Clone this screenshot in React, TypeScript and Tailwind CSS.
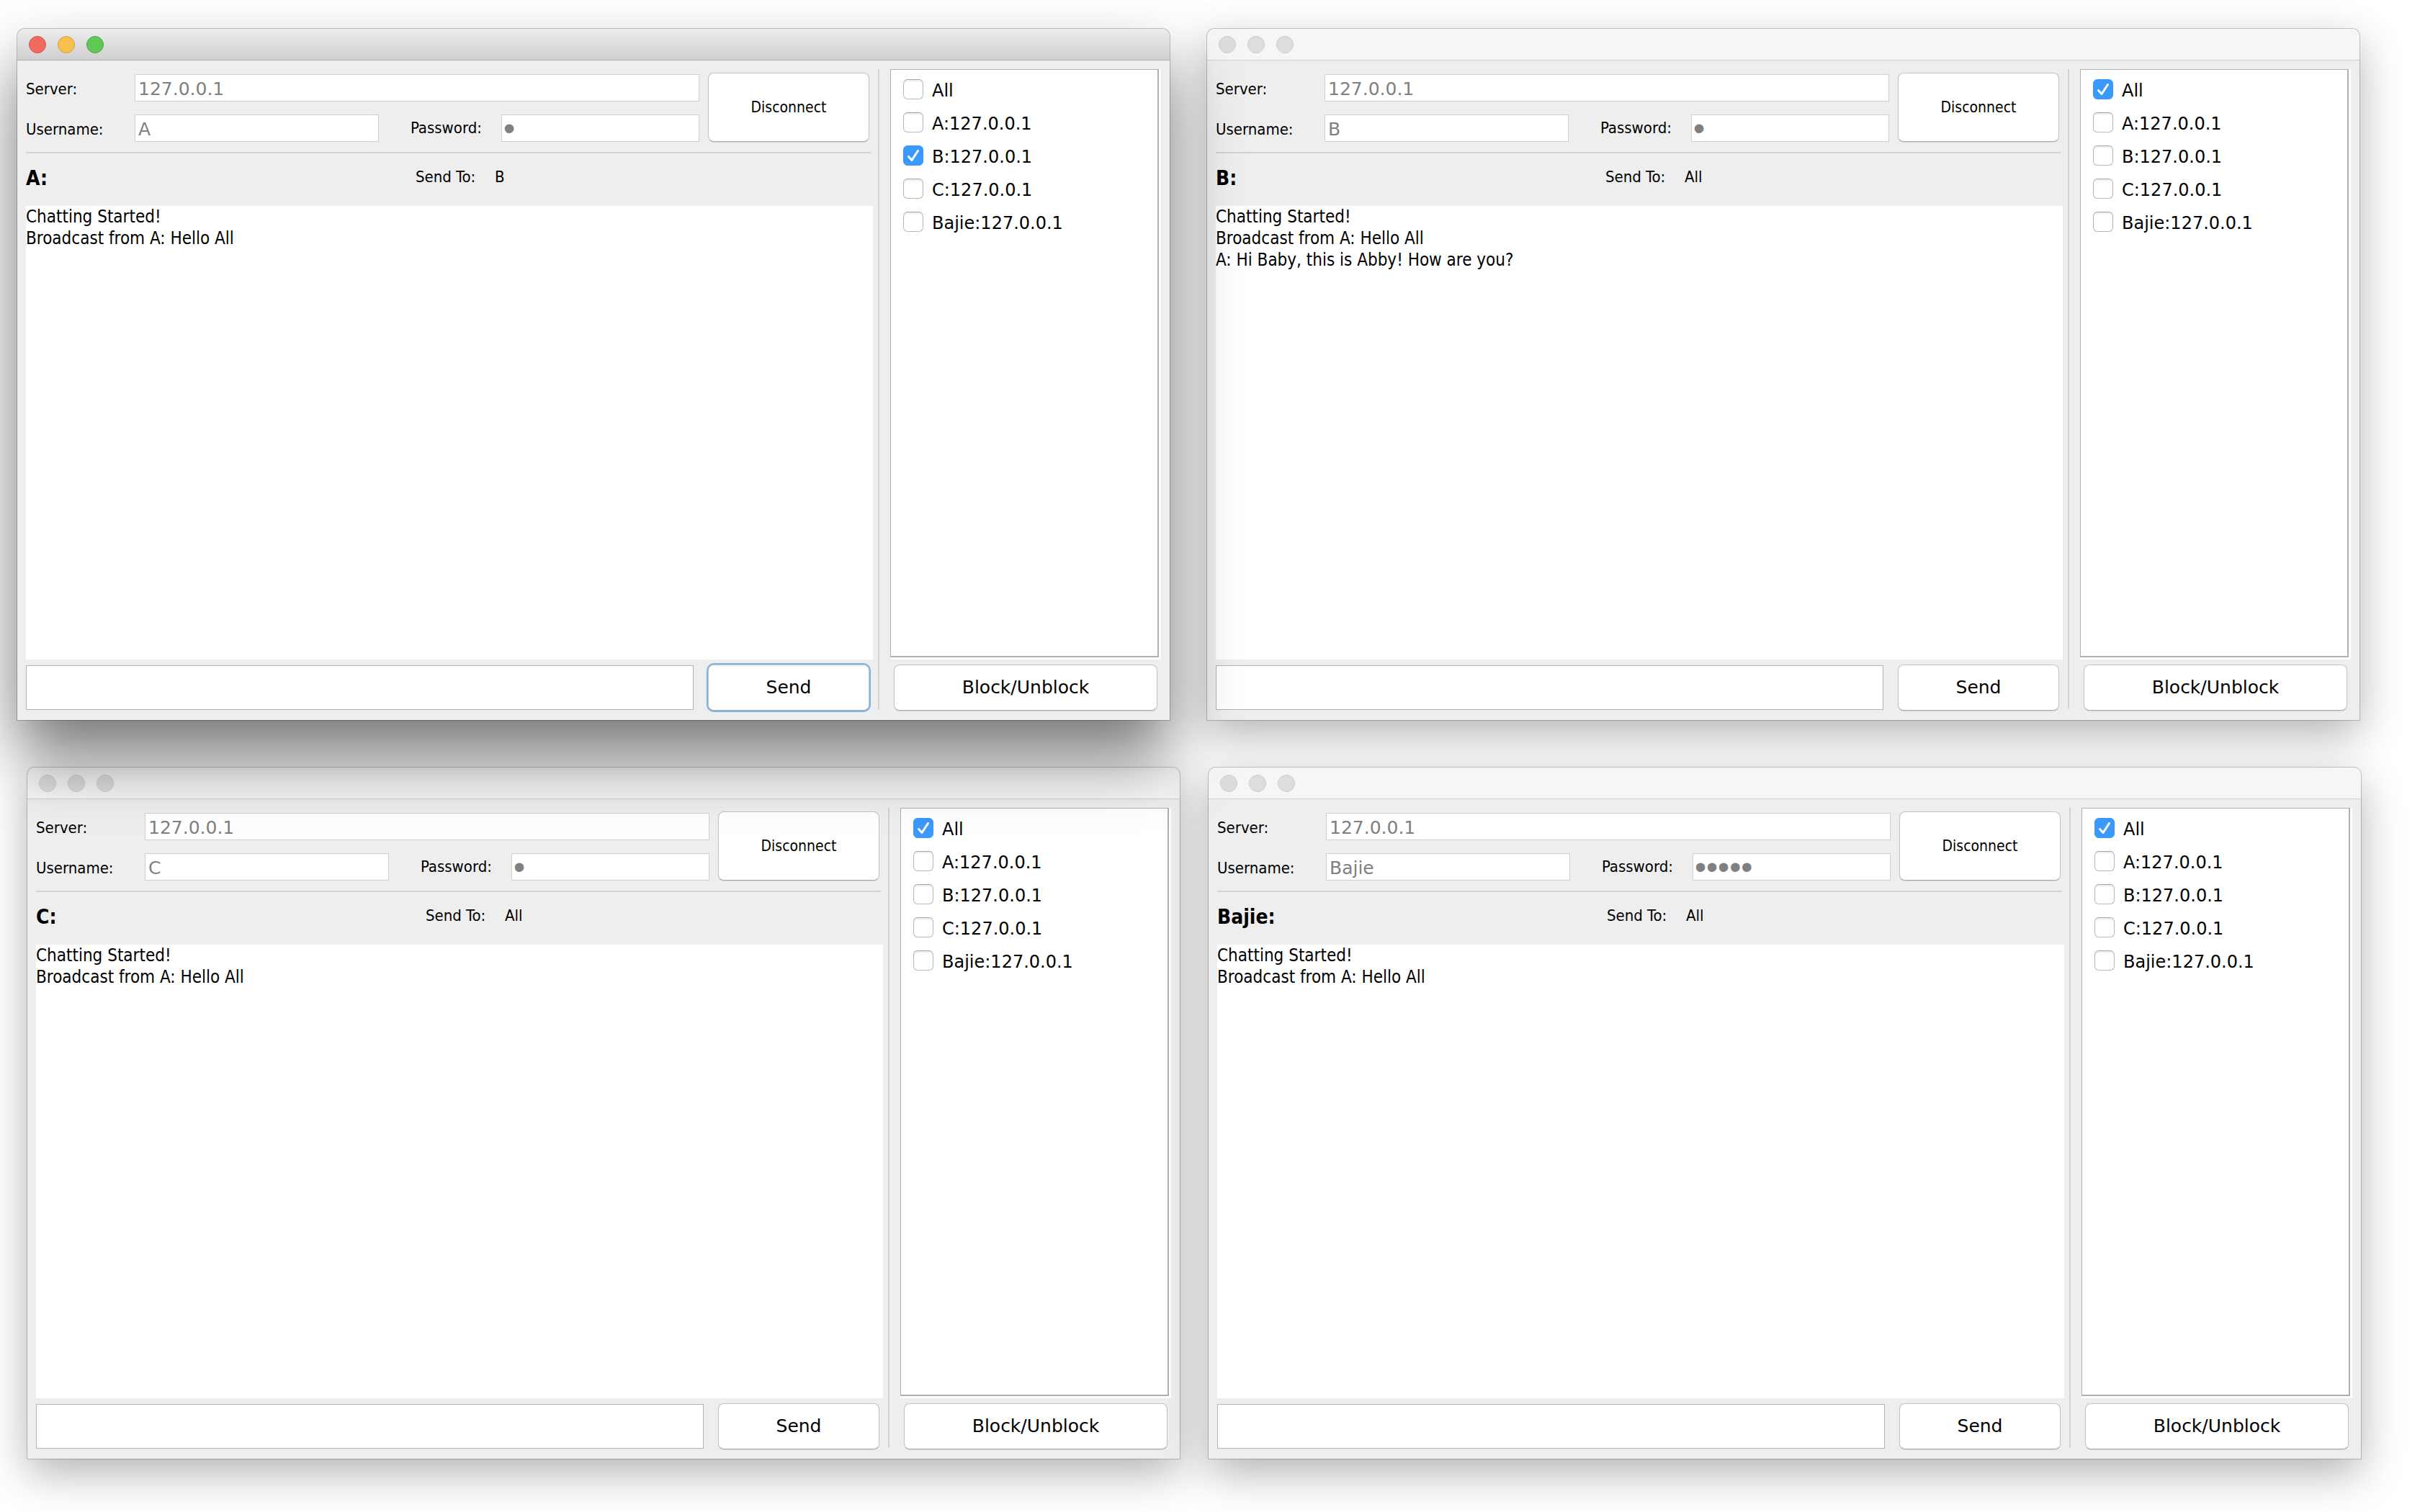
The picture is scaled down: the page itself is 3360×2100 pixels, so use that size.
import { useId } from "react";

type ChatWindowProps = {
  user: string;
  passwordLength: number;
  sendTo: string;
  messages: string[];
  active?: boolean;
  layer: string;
};

const SERVER = "127.0.0.1";

const USERS = ["A", "B", "C", "Bajie"];

const BUTTON =
  "rounded-lg border border-[#c4c4c4] border-b-[#a9a9a9] bg-white text-black shadow-[0_1px_1px_rgba(0,0,0,0.1)]";

const FIELD = "h-[38px] min-w-0 border border-[#d0d0d0] bg-white text-[#808080]";

const FIELD_TEXT =
  "px-1 pt-0.5 font-['DejaVu_Sans','Noto_Sans',sans-serif] text-[25px] leading-8";

const LABEL = "text-[22px] leading-7 text-black";

function TitleBar({ active }: { active?: boolean }) {
  const bar = active
    ? "border-[#adadad] bg-linear-to-b from-[#ececec] to-[#d0d0d0]"
    : "border-[#cfcfcf] bg-[#f6f6f6]";
  const lights = active
    ? [
        { name: "Close", tone: "border-[#dc5248] bg-[#ee6b60]" },
        { name: "Minimize", tone: "border-[#dba038] bg-[#f5c04f]" },
        { name: "Zoom", tone: "border-[#4aa93c] bg-[#61c756]" },
      ]
    : [
        { name: "Close", tone: "border-[#cdcdcd] bg-[#dddddd]" },
        { name: "Minimize", tone: "border-[#cdcdcd] bg-[#dddddd]" },
        { name: "Zoom", tone: "border-[#cdcdcd] bg-[#dddddd]" },
      ];
  return (
    <header className={`flex h-11 items-center gap-4 rounded-t-[10px] border-b px-4 ${bar}`}>
      {lights.map((light) => (
        <button
          key={light.name}
          type="button"
          aria-label={light.name}
          className={`size-6 rounded-full border ${light.tone}`}
        />
      ))}
    </header>
  );
}

function Recipient({ label, checked }: { label: string; checked: boolean }) {
  return (
    <label className="flex h-7 items-center gap-3 font-['DejaVu_Sans','Noto_Sans',sans-serif] text-2xl leading-7 text-black">
      <span className="grid size-7 shrink-0">
        <input
          type="checkbox"
          defaultChecked={checked}
          className="peer col-start-1 row-start-1 size-7 appearance-none rounded-[6px] border border-[#b9b9b9] border-t-[#a5a5a5] bg-white shadow-[inset_0_2px_2px_rgba(0,0,0,0.08)] checked:border-[#3b96f6] checked:bg-[#3b99fc] checked:shadow-none"
        />
        <svg
          viewBox="0 0 28 28"
          fill="none"
          stroke="white"
          strokeWidth="3"
          strokeLinecap="round"
          strokeLinejoin="round"
          aria-hidden="true"
          className="pointer-events-none col-start-1 row-start-1 hidden size-7 peer-checked:block"
        >
          <path d="M7.5 15.5 L12 20.5 L20.5 7.5" />
        </svg>
      </span>
      <span className="pt-1">{label}</span>
    </label>
  );
}

function ChatWindow({ user, passwordLength, sendTo, messages, active, layer }: ChatWindowProps) {
  const id = useId();
  const shadow = active
    ? "shadow-[0_0_0_1px_rgba(0,0,0,0.22),0_50px_90px_rgba(0,0,0,0.54)]"
    : "shadow-[0_0_0_1px_rgba(0,0,0,0.2),0_20px_60px_rgba(0,0,0,0.3)]";
  const sendRing = active ? "ring-2 ring-[#7fb2ea]" : "";
  return (
    <section
      aria-label={`Chat window of ${user}`}
      className={`relative flex min-w-0 flex-1 flex-col rounded-t-[10px] bg-[#eeeeee] ${layer} ${shadow}`}
    >
      <TitleBar active={active} />
      <div className="flex flex-1 px-3 pt-3 pb-3">
        <div className="flex min-w-0 flex-1 flex-col">
          <form className="mt-[5px] flex gap-3 pr-[5px]">
            <div className="flex min-w-0 flex-1 flex-col gap-[18px] pt-0.5">
              <div className="flex items-center">
                <label htmlFor={`${id}-server`} className={`w-[151px] shrink-0 pt-1 ${LABEL}`}>
                  Server:
                </label>
                <input
                  id={`${id}-server`}
                  disabled
                  defaultValue={SERVER}
                  className={`flex-1 ${FIELD} ${FIELD_TEXT}`}
                />
              </div>
              <div className="flex items-center">
                <label htmlFor={`${id}-name`} className={`w-[151px] shrink-0 pt-1 ${LABEL}`}>
                  Username:
                </label>
                <input
                  id={`${id}-name`}
                  disabled
                  defaultValue={user}
                  className={`flex-[11] ${FIELD} ${FIELD_TEXT}`}
                />
                <label htmlFor={`${id}-pass`} className={`ml-11 w-[126px] shrink-0 ${LABEL}`}>
                  Password:
                </label>
                <input
                  id={`${id}-pass`}
                  type="password"
                  disabled
                  defaultValue={"x".repeat(passwordLength)}
                  className={`flex-[9] px-0.5 font-['Liberation_Sans',sans-serif] text-[46px] leading-8 ${FIELD}`}
                />
              </div>
            </div>
            <button type="button" className={`w-56 shrink-0 text-[21px] leading-7 ${BUTTON}`}>
              Disconnect
            </button>
          </form>
          <hr className="mt-3.5 mr-[3px] h-0.5 border-0 bg-[#d3d3d3]" />
          <div className="flex h-[73px] items-center pb-1">
            <h2 className="w-[46%] text-[28px] leading-9 font-bold text-black">{user}:</h2>
            <span className={`w-[110px] pb-1 ${LABEL}`}>Send To:</span>
            <output className={`pb-1 ${LABEL}`}>{sendTo}</output>
          </div>
          <textarea
            readOnly
            aria-label="Conversation"
            value={messages.join("\n")}
            className="min-h-60 w-full flex-1 resize-none bg-white text-2xl leading-[30px] text-black outline-none"
          />
          <form className="mt-1.5 flex h-[66px] items-center gap-5 pr-[5px]">
            <input
              aria-label="Message"
              className="h-[62px] min-w-0 flex-1 border border-[#b4b4b4] bg-white px-2 text-2xl"
            />
            <button
              type="button"
              className={`h-16 w-56 font-['DejaVu_Sans','Noto_Sans',sans-serif] text-[25px] ${BUTTON} ${sendRing}`}
            >
              Send
            </button>
          </form>
        </div>
        <div className="mr-[15px] mb-[3px] ml-[7px] w-0.5 bg-[#d3d3d3]" />
        <aside className="flex w-[376px] shrink-0 flex-col">
          <div className="flex flex-1 bg-white pr-[3px] pb-[3px]">
            <fieldset className="flex flex-1 flex-col gap-[18px] border-t border-r-2 border-b-2 border-l border-[#b0b0b0] pt-[13px] pl-[17px]">
              <Recipient label="All" checked={sendTo === "All"} />
              {USERS.map((name) => (
                <Recipient key={name} label={`${name}:${SERVER}`} checked={sendTo === name} />
              ))}
            </fieldset>
          </div>
          <div className="mt-1.5 flex h-[66px] items-center px-[5px]">
            <button
              type="button"
              className={`h-16 flex-1 font-['DejaVu_Sans','Noto_Sans',sans-serif] text-[25px] ${BUTTON}`}
            >
              Block/Unblock
            </button>
          </div>
        </aside>
      </div>
    </section>
  );
}

export default function App() {
  const opening = ["Chatting Started!", "Broadcast from A: Hello All"];
  return (
    <main className="flex min-h-screen flex-col gap-[66px] overflow-hidden bg-white pt-10 pb-[74px] font-['DejaVu_Sans_Condensed','Noto_Sans',sans-serif]">
      <div className="flex flex-1 gap-[52px] pr-[84px] pl-6">
        <ChatWindow user="A" passwordLength={1} sendTo="B" messages={opening} active layer="z-30" />
        <ChatWindow
          user="B"
          passwordLength={1}
          sendTo="All"
          messages={[...opening, "A: Hi Baby, this is Abby! How are you?"]}
          layer="z-0"
        />
      </div>
      <div className="flex flex-1 gap-10 pr-[82px] pl-[38px]">
        <ChatWindow user="C" passwordLength={1} sendTo="All" messages={opening} layer="z-10" />
        <ChatWindow user="Bajie" passwordLength={5} sendTo="All" messages={opening} layer="z-20" />
      </div>
    </main>
  );
}
